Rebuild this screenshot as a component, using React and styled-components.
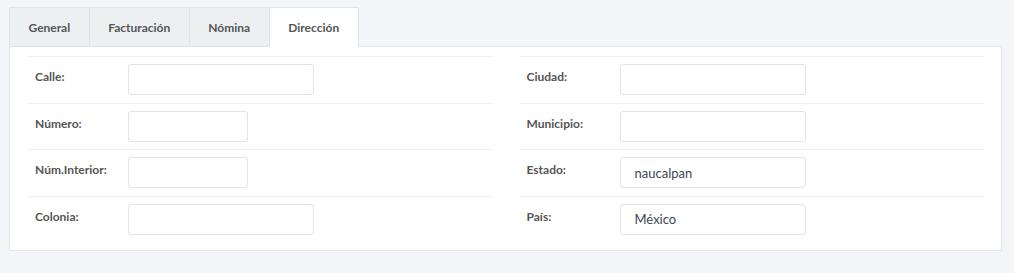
import React from "react"
import styled, { createGlobalStyle } from "styled-components"

const GlobalStyle = createGlobalStyle`
  body {
    margin: 0;
    background: #f3f5f8;
    font-family: Lato, "Liberation Sans", sans-serif;
  }
`

const Page = styled.div`
  padding: 7px 12px 0 9px;
`

const TabList = styled.div`
  display: flex;
  position: relative;
  z-index: 1;
`

const Tab = styled.div`
  height: 38px;
  padding: 0 18.5px;
  display: flex;
  align-items: center;
  font-size: 12px;
  font-weight: 700;
  color: #555;
  border: 1px solid #dde3e6;
  border-left: ${p => (p.$first ? "1px solid #dde3e6" : "none")};
  border-bottom: ${p => (p.$active ? "1px solid #fff" : "1px solid #dde3e6")};
  background: ${p => (p.$active ? "#fff" : "#ecf0f1")};
  margin-bottom: -1px;
`

const Panel = styled.div`
  background: #fff;
  border: 1px solid #e3e7ea;
  border-radius: 0 2px 2px 2px;
  box-shadow: 0 1px 1px rgba(0, 0, 0, 0.06);
  padding: 9px 17px 7px 18px;
  display: grid;
  grid-template-columns: 1fr 1fr;
  column-gap: 27px;
`

const Column = styled.div`
  display: flex;
  flex-direction: column;
`

const Row = styled.div`
  display: flex;
  align-items: flex-start;
  border-top: 1px solid #eceff1;
  padding: 7px 0 7.67px;
`

const Label = styled.label`
  width: 93px;
  padding: 4px 0 0 7px;
  font-size: 12px;
  font-weight: 700;
  line-height: 18px;
  color: #555;
`

const Input = styled.input`
  box-sizing: border-box;
  width: ${p => p.$w}px;
  height: 31px;
  border: 1px solid #dde5e5;
  border-radius: 3px;
  padding: 0 14px;
  font-family: inherit;
  font-size: 13px;
  color: #3b4654;
  background: #fff;
  outline: none;
`

const left = [
  { label: "Calle:", w: 186 },
  { label: "Número:", w: 120 },
  { label: "Núm.Interior:", w: 120 },
  { label: "Colonia:", w: 186 },
]

const right = [
  { label: "Ciudad:", w: 186 },
  { label: "Municipio:", w: 186 },
  { label: "Estado:", w: 186, value: "naucalpan" },
  { label: "País:", w: 186, value: "México" },
]

function Field({ label, w, value }) {
  return (
    <Row>
      <Label>{label}</Label>
      <Input $w={w} defaultValue={value || ""} />
    </Row>
  )
}

export default function App() {
  return (
    <Page>
      <GlobalStyle />
      <TabList>
        <Tab $first>General</Tab>
        <Tab>Facturación</Tab>
        <Tab>Nómina</Tab>
        <Tab $active>Dirección</Tab>
      </TabList>
      <Panel>
        <Column>
          {left.map(f => (
            <Field key={f.label} {...f} />
          ))}
        </Column>
        <Column>
          {right.map(f => (
            <Field key={f.label} {...f} />
          ))}
        </Column>
      </Panel>
    </Page>
  )
}
